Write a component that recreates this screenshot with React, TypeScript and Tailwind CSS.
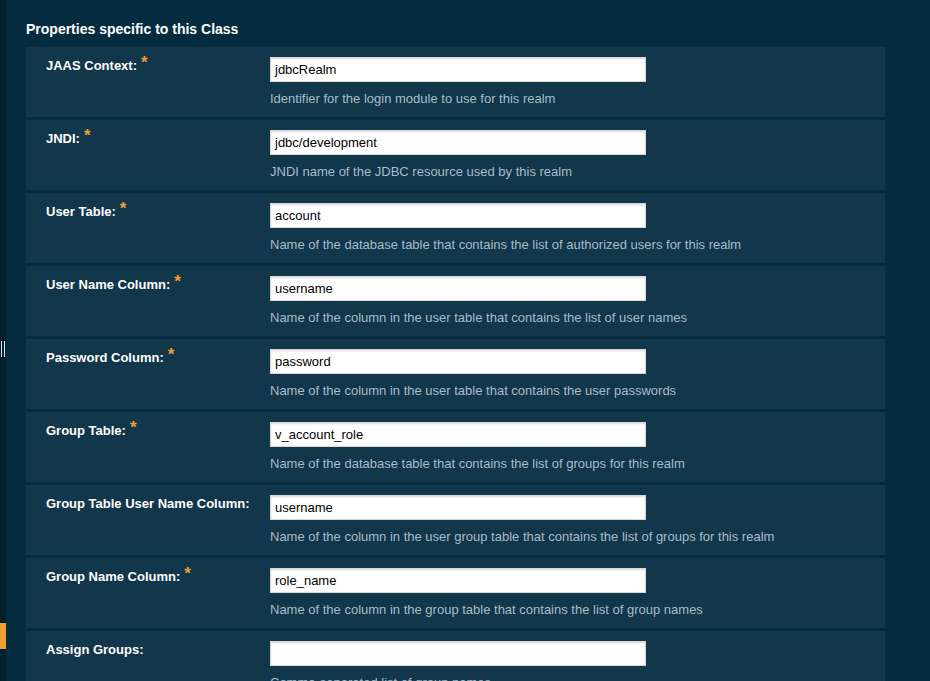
const rows = [
  { label: "JAAS Context:", req: true, value: "jdbcRealm", help: "Identifier for the login module to use for this realm" },
  { label: "JNDI:", req: true, value: "jdbc/development", help: "JNDI name of the JDBC resource used by this realm" },
  { label: "User Table:", req: true, value: "account", help: "Name of the database table that contains the list of authorized users for this realm" },
  { label: "User Name Column:", req: true, value: "username", help: "Name of the column in the user table that contains the list of user names" },
  { label: "Password Column:", req: true, value: "password", help: "Name of the column in the user table that contains the user passwords" },
  { label: "Group Table:", req: true, value: "v_account_role", help: "Name of the database table that contains the list of groups for this realm" },
  { label: "Group Table User Name Column:", req: false, value: "username", help: "Name of the column in the user group table that contains the list of groups for this realm" },
  { label: "Group Name Column:", req: true, value: "role_name", help: "Name of the column in the group table that contains the list of group names" },
  { label: "Assign Groups:", req: false, value: "", help: "Comma-separated list of group names" },
];

export default function App() {
  return (
    <div
      className="flex h-[681px] w-[930px] overflow-hidden bg-[#052b3f]"
      style={{ fontFamily: '"Liberation Sans", Arial, Helvetica, sans-serif' }}
    >
      {/* left rail */}
      <div className="flex w-[6px] flex-col bg-[#03202f]">
        <div className="h-[341px]" />
        <div className="ml-[1px] flex h-[16px] gap-[2px]">
          <div className="w-[1px] bg-[#e6e6e6]" />
          <div className="w-[1px] bg-[#e6e6e6]" />
        </div>
        <div className="h-[266px]" />
        <div className="h-[26px] bg-[#f0a030]" />
      </div>

      <div className="flex w-[879px] flex-col pl-[20px] pt-[21px]">
        <h2 className="mb-[10px] text-[14px] font-bold leading-[16px] text-white">
          Properties specific to this Class
        </h2>
        <div className="flex flex-col gap-[3px]">
          {rows.map((row, i) => (
            <div key={i} className="flex h-[70px] shrink-0 bg-[#12364a]">
              <div className="flex w-[224px] shrink-0 items-start gap-[4px] ml-[20px] pt-[11px]">
                <span className="text-[13px] font-bold leading-[15px] text-white">
                  {row.label}
                </span>
                {row.req && (
                  <span className="-mt-[4px] text-[17px] font-bold leading-[17px] text-[#f0a030]">
                    *
                  </span>
                )}
              </div>
              <div className="flex flex-col pt-[10px]">
                <div className="flex h-[25px] w-[376px] items-center border border-[#d8d8d8] bg-white pl-[4px] text-[13px] text-black shadow-[inset_0_1px_2px_rgba(0,0,0,0.15)]">
                  {row.value}
                </div>
                <p className="mt-[9px] text-[13px] leading-[15px] text-[#a7bdc9]">
                  {row.help}
                </p>
              </div>
            </div>
          ))}
        </div>
      </div>
    </div>
  );
}
